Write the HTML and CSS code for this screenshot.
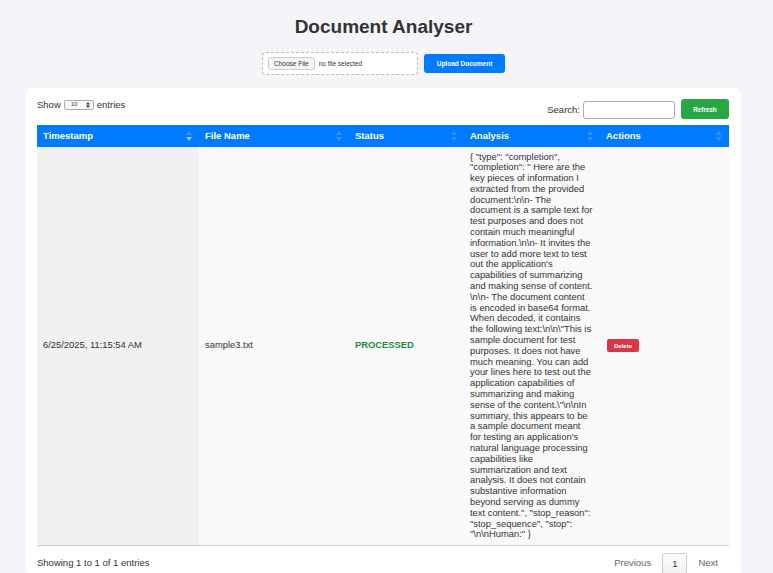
FILE: index.html
```html
<!DOCTYPE html>
<html lang="en">
<head>
    <meta charset="UTF-8">
    <meta name="viewport" content="width=device-width, initial-scale=1.0">
    <title>Document Analyser</title>
    <link rel="stylesheet" href="styles.css">
</head>
<body>
    <div class="page">
        <h1>Document Analyser</h1>
        <form class="upload">
            <div class="file_box">
                <span class="choose">Choose File</span>
                <span class="file_name">no file selected</span>
            </div>
            <button type="button" class="btn btn_upload">Upload Document</button>
        </form>

        <div class="card">
            <div class="controls">
                <div class="length">
                    Show
                    <span class="select">10
                        <svg width="4" height="6" viewBox="0 0 4 6"><path d="M0 2.4 L2 0 L4 2.4 Z M0 3.6 L2 6 L4 3.6 Z" fill="#333"/></svg>
                    </span>
                    entries
                </div>
                <div class="right">
                    <label class="search">Search: <input type="text"></label>
                    <button type="button" class="btn btn_refresh">Refresh</button>
                </div>
            </div>

            <table>
                <colgroup>
                    <col style="width:162px">
                    <col style="width:150px">
                    <col style="width:115px">
                    <col style="width:136px">
                    <col style="width:129px">
                </colgroup>
                <thead>
                    <tr>
                        <th class="sorted">Timestamp</th>
                        <th>File Name</th>
                        <th>Status</th>
                        <th>Analysis</th>
                        <th>Actions</th>
                    </tr>
                </thead>
                <tbody>
                    <tr>
                        <td class="sorting_1">6/25/2025, 11:15:54 AM</td>
                        <td>sample3.txt</td>
                        <td class="status">PROCESSED</td>
                        <td class="analysis">{ "type": "completion", "completion": " Here are the key pieces of information I extracted from the provided document:\n\n- The document is a sample text for test purposes and does not contain much meaningful information.\n\n- It invites the user to add more text to test out the application's capabilities of summarizing and making sense of content.<wbr>\n\n- The document content is encoded in base64 format. When decoded, it contains the following text:\n\n\"This is sample document for test purposes. It does not have much meaning. You can add your lines here to test out the application capabilities of summarizing and making sense of the content.\"\n\nIn summary, this appears to be a sample document meant for testing an application's natural language processing capabilities like summarization and text analysis. It does not contain substantive information beyond serving as dummy text content.", "stop_reason": "stop_sequence", "stop": "\n\nHuman:" }</td>
                        <td><button type="button" class="btn btn_delete">Delete</button></td>
                    </tr>
                </tbody>
            </table>

            <div class="footer">
                <span>Showing 1 to 1 of 1 entries</span>
                <div class="paging">
                    <span class="page_btn">Previous</span>
                    <span class="page_btn current">1</span>
                    <span class="page_btn">Next</span>
                </div>
            </div>
        </div>
    </div>
</body>
</html>
```

FILE: styles.css
```css
* {margin: 0; padding: 0; box-sizing: border-box;}
body {
    background: #f4f4f9;
    font-family: "Liberation Sans", Arial, sans-serif;
    color: #333;
    font-size: 9.5px;
}
.page {
    width: 715px;
    margin-left: 26px;
}
h1 {
    margin-top: 16px;
    font-size: 19px;
    line-height: 22px;
    text-align: center;
    color: #333;
}

/* upload */
.upload {
    margin-top: 14px;
    display: flex;
    justify-content: center;
    align-items: center;
    gap: 6px;
}
.file_box {
    width: 156px;
    height: 23px;
    border: 1px dashed #bbb;
    border-radius: 4px;
    background: #fff;
    display: flex;
    align-items: center;
    padding-left: 5px;
    gap: 4px;
    font-size: 6.5px;
}
.choose {
    border: 1px solid #ccc;
    border-radius: 3px;
    background: #f5f5f5;
    padding: 1px 5px;
    line-height: 9px;
}
.btn {
    border: none;
    color: #fff;
    font-family: inherit;
    font-weight: bold;
    cursor: pointer;
}
.btn_upload {
    width: 81px;
    height: 19px;
    background: #007bff;
    border-radius: 3px;
    font-size: 6.5px;
}

/* card */
.card {
    margin-top: 13px;
    background: #fff;
    border-radius: 6px;
    padding: 11px 12px 0 11px;
}
.controls {
    display: flex;
    justify-content: space-between;
    align-items: flex-start;
}
.length {
    display: flex;
    align-items: center;
    gap: 3px;
    line-height: 11px;
}
.select {
    width: 30px;
    height: 10px;
    border: 1px solid #aaa;
    border-radius: 2px;
    font-size: 6px;
    display: flex;
    justify-content: space-between;
    align-items: center;
    padding: 0 3px 0 6px;
    background: #fafafa;
}
.right {
    display: flex;
    align-items: center;
    gap: 6px;
}
.search {
    display: flex;
    align-items: center;
    gap: 3px;
    margin-top: 1px;
}
.search input {
    width: 92px;
    height: 18px;
    border: 1px solid #aaa;
    border-radius: 3px;
}
.btn_refresh {
    width: 48px;
    height: 20px;
    background: #28a745;
    border-radius: 3px;
    font-size: 6.3px;
}

/* table */
table {
    margin-top: 6px;
    width: 100%;
    table-layout: fixed;
    border-collapse: collapse;
}
th {
    position: relative;
    background: #007bff;
    color: #fff;
    text-align: left;
    font-size: 9.5px;
    line-height: 12px;
    padding: 5px 6px 5px;
}
th::before, th::after {
    content: '';
    position: absolute;
    right: 7px;
    border-left: 3px solid transparent;
    border-right: 3px solid transparent;
    opacity: 0.2;
}
th::before {
    top: 6px;
    border-bottom: 4px solid #fff;
}
th::after {
    bottom: 6px;
    border-top: 4px solid #fff;
}
th.sorted::after {
    opacity: 0.6;
}
td {
    background: #f9f9f9;
    padding: 4.5px 6px;
    font-size: 9.4px;
    line-height: 10.8px;
    vertical-align: middle;
    border-bottom: 1px solid #ccc;
}
td.analysis {
    padding-right: 7px;
}
td.sorting_1 {
    background: #f0f0f0;
}
.status {
    color: #1f8c3b;
    font-weight: bold;
}
.btn_delete {
    background: #dc3545;
    border-radius: 2px;
    font-size: 6px;
    padding: 3.5px 7px;
    margin-left: 1px;
}

/* footer */
.footer {
    display: flex;
    justify-content: space-between;
    align-items: flex-start;
    padding-top: 7px;
}
.footer > span {
    line-height: 20px;
}
.paging {
    display: flex;
    margin-right: 6px;
}
.page_btn {
    padding: 0 5px;
    line-height: 20px;
    color: #666;
    margin-left: 6px;
}
.page_btn.current {
    color: #333;
    border: 1px solid #ccc;
    border-radius: 2px;
    padding: 0 9px;
    background: linear-gradient(#fff, #f0f0f0);
}
```
